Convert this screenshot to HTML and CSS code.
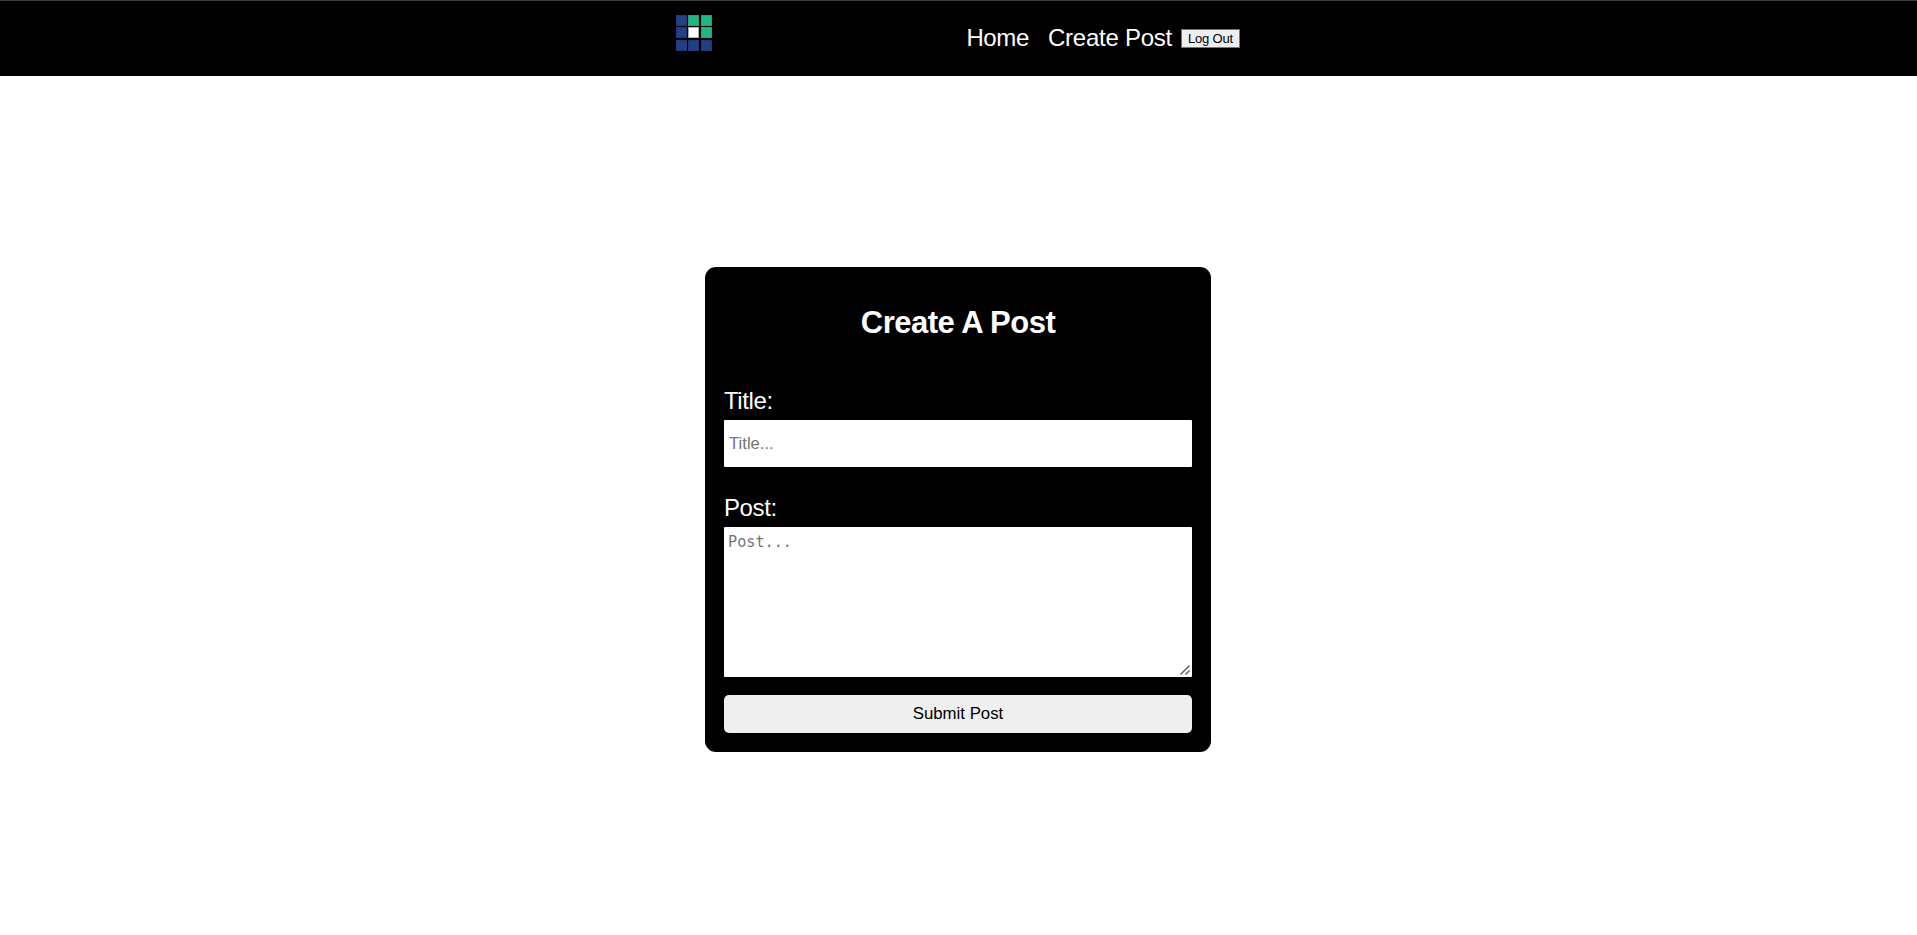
FILE: index.html
```html
<!DOCTYPE html>
<html lang="en">
<head>
<meta charset="utf-8">
<title>Create Post</title>
<link rel="stylesheet" href="styles.css">
</head>
<body>
<nav class="navbar">
  <svg class="logo" width="37" height="37" viewBox="0 0 37 37">
    <g fill="#233f85" stroke="#1f3878">
      <rect x=".5" y=".5" width="10" height="10"/>
      <rect x=".5" y="12.5" width="10" height="10"/>
      <rect x=".5" y="25.5" width="10" height="10"/>
      <rect x="12.5" y="25.5" width="10" height="10"/>
      <rect x="25.5" y="25.5" width="10" height="10"/>
    </g>
    <g fill="#22b584" stroke="#1fa577">
      <rect x="12.5" y=".5" width="10" height="10"/>
      <rect x="25.5" y=".5" width="10" height="10"/>
      <rect x="25.5" y="12.5" width="10" height="10"/>
    </g>
    <rect x="12.5" y="12.5" width="10" height="10" fill="#fff" stroke="#aaa"/>
  </svg>
  <div class="links">
    <a class="link">Home</a>
    <a class="link">Create Post</a>
    <button class="logout">Log Out</button>
  </div>
</nav>
<main class="page">
  <form class="card">
    <h1 class="heading">Create A Post</h1>
    <label class="label" for="title">Title:</label>
    <input class="title-input" id="title" placeholder="Title...">
    <label class="label" for="post">Post:</label>
    <div class="post-field">
      <textarea class="post-input" id="post" placeholder="Post..."></textarea>
      <svg class="grip" width="12" height="12" viewBox="0 0 12 12" stroke="#555" stroke-width="1.4">
        <path d="M1.5 10.5 10.5 1.5M6.5 10.5 10.5 6.5"/>
      </svg>
    </div>
    <button class="submit" type="button">Submit Post</button>
  </form>
</main>
</body>
</html>
```
FILE: styles.css
```css
* { box-sizing: border-box; }
body {
  margin: 0;
  height: 935px;
  overflow: hidden;
  background: #fff;
  font-family: "Liberation Sans", Arial, sans-serif;
}
.navbar {
  display: flex;
  align-items: flex-start;
  justify-content: space-between;
  height: 76px;
  padding: 14px 677px 0 676px;
  border-top: 1px solid #3c3c3c;
  background: #000;
}
.links {
  display: flex;
  align-items: center;
  height: 47px;
}
.link {
  margin-right: 19px;
  padding-bottom: 2px;
  color: #fff;
  font-size: 24px;
  letter-spacing: -0.35px;
  line-height: 28px;
}
.link + .link {
  margin-right: 9px;
  letter-spacing: -0.25px;
}
.logout {
  width: 59px;
  height: 19px;
  padding: 0;
  border: 1px solid #767676;
  background: #efefef;
  color: #000;
  font: 13px/17px "Liberation Sans", Arial, sans-serif;
  letter-spacing: -0.2px;
}
.page {
  display: flex;
  justify-content: center;
  padding: 191px 1px 0 0;
}
.card {
  display: flex;
  flex-direction: column;
  width: 506px;
  height: 485px;
  padding: 38px 19px 19px;
  border-radius: 11px;
  background: #000;
}
.heading {
  margin: 0 0 45px;
  color: #fff;
  font-size: 31px;
  letter-spacing: -0.5px;
  line-height: 36px;
  text-align: center;
}
.label {
  margin-bottom: 4px;
  color: #fff;
  font-size: 24px;
  letter-spacing: -0.4px;
  line-height: 30px;
}
.title-input {
  flex: none;
  height: 47px;
  margin: 0 0 26px;
  padding: 0 5px;
  border: 0;
  border-radius: 1px;
  background: #fff;
  font: 16.67px "Liberation Sans", Arial, sans-serif;
}
.post-field {
  position: relative;
  flex: none;
  height: 150px;
  margin-bottom: 18px;
}
.post-input {
  display: block;
  width: 100%;
  height: 100%;
  padding: 6px 4px;
  border: 0;
  border-radius: 1px;
  background: #fff;
  font: 15.2px/19px "DejaVu Sans Mono", monospace;
  resize: none;
}
.grip {
  position: absolute;
  right: 1px;
  bottom: 1px;
}
.title-input::placeholder,
.post-input::placeholder { color: #757575; }
.submit {
  height: 38px;
  padding: 0;
  border: 0;
  border-radius: 5px;
  background: #efefef;
  color: #000;
  font: 16.8px "Liberation Sans", Arial, sans-serif;
}
```
